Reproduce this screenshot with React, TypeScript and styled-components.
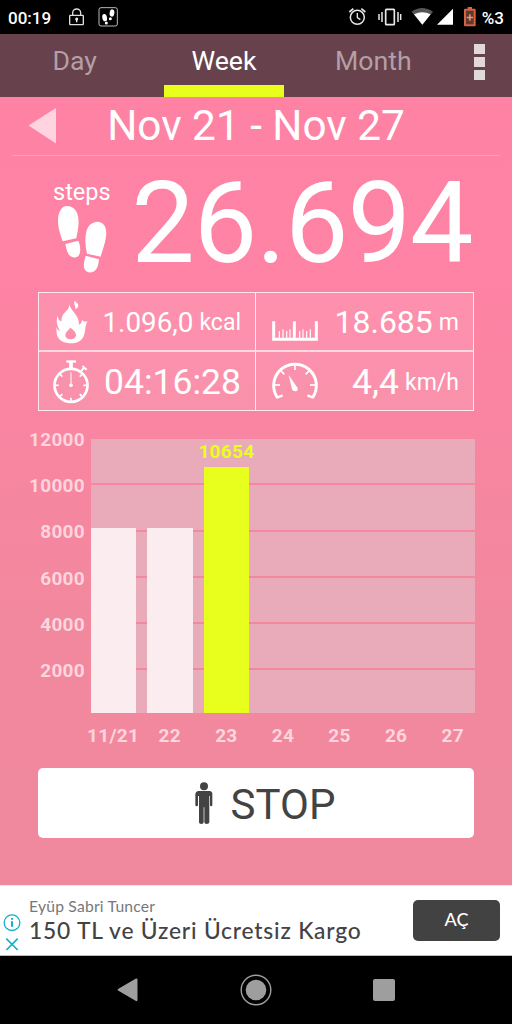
import * as React from 'react'
import styled, { createGlobalStyle } from 'styled-components'

const YELLOW = '#e8ff1e'

const GlobalStyle = createGlobalStyle`
body {
    margin: 0;
    background: #000;
    font-family: Roboto, "Liberation Sans", sans-serif;
}

svg {
    display: block;
    flex: none;
}
`

const Screen = styled.div`
    display: flex;
    flex-direction: column;
    width: 512px;
    height: 1024px;
    overflow: hidden;
    color: #fff;
    background: #000;
`

const StatusBar = styled.div`
    display: flex;
    align-items: center;
    justify-content: space-between;
    height: 34px;
    padding: 0 8px;
    box-sizing: border-box;
    font-size: 17px;
    font-weight: 500;

    .group {
        display: flex;
        align-items: center;
        height: 34px;
    }

    .time {
        padding-top: 1px;
        width: 60px;
    }

    .percent {
        padding: 1px 0 0 6px;
    }
`

const Tabs = styled.div`
    display: flex;
    height: 63px;
    background: #67424c;
`

const Tab = styled.div<{ $active?: boolean }>`
    display: grid;
    grid-template-rows: 51px 12px;
    width: 149.3px;
    text-align: center;
    font-size: 26.7px;
    line-height: 54px;
    color: ${p => (p.$active ? '#fff' : '#b39fa5')};

    .line {
        margin: 0 15px;
        background: ${p => (p.$active ? YELLOW : 'transparent')};
    }
`

const MenuButton = styled.div`
    display: flex;
    flex: 1;
    flex-direction: column;
    align-items: center;
    gap: 3px;
    padding-top: 10px;

    span {
        width: 11px;
        height: 10px;
        background: #e1d8db;
    }
`

const Content = styled.div`
    display: flex;
    flex-direction: column;
    height: 788px;
    background: linear-gradient(180deg, #ff82a5 0%, #fd83a3 28%, #f2889e 65%, #f0899d 100%);
`

const DateHeader = styled.div`
    display: grid;
    grid-template-columns: 1fr auto 1fr;
    align-items: center;
    height: 58px;
    margin: 0 12px;
    padding: 0 16px;
    border-bottom: 1px solid #ff9fb9;
    font-size: 42.3px;
    line-height: 58px;
`

const Summary = styled.div`
    display: flex;
    justify-content: space-between;
    height: 136px;
    padding: 0 39.5px 0 53px;

    .label {
        height: 27px;
        padding-top: 22px;
        font-size: 23.5px;
        line-height: 28px;
    }

    .total {
        font-size: 113px;
        letter-spacing: -1px;
        line-height: 136px;
    }
`

const StatTable = styled.div`
    display: grid;
    grid-template-columns: 216px 1fr;
    grid-template-rows: 57px 1fr;
    width: 436px;
    height: 119px;
    margin-left: 38px;
    box-sizing: border-box;
    border: 1.5px solid #ffe9ee;
    background: rgba(255, 255, 255, 0.11);
`

const Stat = styled.div<{ $right?: boolean; $bottom?: boolean }>`
    display: flex;
    align-items: center;
    justify-content: space-between;
    padding: 0 14px 0 13px;
    border-left: ${p => (p.$right ? '1px solid #ffe9ee' : 'none')};
    border-top: ${p => (p.$bottom ? '2px solid #ffd9e2' : 'none')};
`

const Value = styled.div<{ $size: number; $raise?: number }>`
    display: flex;
    align-items: baseline;
    padding-top: 2px;
    font-size: ${p => p.$size}px;
    white-space: nowrap;

    .unit {
        margin-left: 6px;
        padding-bottom: ${p => p.$raise || 0}px;
        transform: translateY(-${p => p.$raise || 0}px);
        font-size: 23px;
    }
`

const Chart = styled.div`
    display: grid;
    grid-template-columns: 85px 384.5px;
    grid-template-rows: 275px 44px;
    column-gap: 5.7px;
    height: 354px;
    padding-top: 27px;
    box-sizing: border-box;
    font-size: 19px;
    font-weight: 700;
    letter-spacing: 0.3px;
    color: #fdd5dd;
`

const Axis = styled.div`
    display: flex;
    flex-direction: column;
    text-align: right;
    margin-top: -10px;

    div {
        height: 46.2px;
        line-height: 23px;
    }
`

const Plot = styled.div`
    display: grid;

    .bands,
    .bars {
        grid-area: 1 / 1;
        display: flex;
    }

    .bands {
        flex-direction: column;
        gap: 2px;
        padding-top: 1px;
    }

    .bands div {
        height: 44.3px;
        background: #e9aab9;
    }

    .bands div:last-child {
        height: auto;
        flex: 1;
    }

    .bars {
        align-items: flex-end;
        justify-content: space-between;
    }
`

const Bar = styled.div<{ $current?: boolean }>`
    position: relative;
    width: 45.3px;
    background: ${p => (p.$current ? YELLOW : '#fbedef')};

    .value {
        position: absolute;
        top: -27px;
        left: -20px;
        right: -20px;
        text-align: center;
        line-height: 24px;
        color: ${YELLOW};
    }
`

const Days = styled.div`
    grid-column: 2;
    display: flex;
    justify-content: space-between;

    div {
        display: flex;
        justify-content: center;
        width: 45px;
        line-height: 46px;
        white-space: nowrap;
    }
`

const StopButton = styled.div`
    display: flex;
    align-items: center;
    justify-content: center;
    gap: 18px;
    width: 436px;
    height: 70px;
    margin: 3px 0 0 38px;
    padding-left: 18px;
    box-sizing: border-box;
    border-radius: 5px;
    background: #fff;
    color: #434343;
    font-size: 42px;

    .label {
        padding-top: 2px;
    }
`

const Ad = styled.div`
    display: flex;
    align-items: center;
    height: 71px;
    padding: 0 12px 0 4px;
    box-sizing: border-box;
    border-top: 1px solid #f6e4e8;
    border-bottom: 1px solid #bbb;
    background: #fff;
    font-family: Lato, Roboto, sans-serif;

    .text {
        flex: 1;
        margin: -2px 0 0 9px;
        white-space: nowrap;
    }

    .brand {
        color: #77777a;
        font-size: 15.7px;
        letter-spacing: 0.2px;
        line-height: 20px;
    }

    .headline {
        color: #434346;
        font-size: 22.8px;
        font-weight: 500;
        letter-spacing: 0.8px;
        line-height: 28px;
    }
`

const AdButton = styled.div`
    width: 87px;
    height: 41px;
    border-radius: 5px;
    background: #424242;
    text-align: center;
    font-size: 18px;
    font-weight: 500;
    line-height: 39px;
`

const NavBar = styled.div`
    display: grid;
    grid-template-columns: repeat(3, 128px);
    justify-content: center;
    justify-items: center;
    align-items: center;
    height: 68px;
`

function Footprints() {
    return (
        <svg width="50" height="69" viewBox="80 120 150 207" fill="#fff" style={{ marginLeft: 3.7 }}>
            <path d="M110 123C92 123 82 145 83 170C84 195 92 212 97 229L138 220C140 205 147 185 144 160C142 138 130 124 110 123Z" />
            <path d="M105 237L144 227C150 240 153 262 144 273C135 281 120 278 114 266C108 254 107 246 105 237Z" />
            <path d="M203 170C225 172 230 195 227 215C225 235 217 252 211 275L170 266C166 245 163 230 167 205C170 185 182 170 203 170Z" />
            <path d="M166 272L206 283C205 295 203 310 192 319C180 326 164 321 161 308C159 295 163 284 166 272Z" />
        </svg>
    )
}

function LeftStatusIcons() {
    return (
        <svg width="51" height="22" viewBox="204 18 153 66" fill="none">
            <rect x="209" y="46" width="41" height="28" rx="2" stroke="#ddd" strokeWidth="4" />
            <path d="M218 45V38a12 11 0 0 1 24 0V45" stroke="#ddd" strokeWidth="4" />
            <circle cx="230" cy="57" r="4.5" fill="#eee" />
            <path d="M230 57V67" stroke="#eee" strokeWidth="4" />
            <rect x="297" y="23" width="55" height="55" rx="6" stroke="#ddd" strokeWidth="2.5" />
            <g fill="#fff">
                <ellipse cx="314" cy="53" rx="7" ry="11" transform="rotate(-12 314 53)" />
                <ellipse cx="319" cy="69" rx="4.5" ry="4.5" />
                <ellipse cx="336" cy="39" rx="7" ry="11" transform="rotate(10 336 39)" />
                <ellipse cx="331" cy="56" rx="4.5" ry="4.5" />
            </g>
        </svg>
    )
}

function RightStatusIcons() {
    return (
        <svg width="128" height="24" viewBox="276 16 384 72" fill="none">
            <circle cx="304" cy="53" r="21" stroke="#e8e8e8" strokeWidth="4.5" />
            <path d="M304 40V54L313 60" stroke="#e8e8e8" strokeWidth="4" />
            <path d="M280 37L292 27M328 37L316 27" stroke="#e8e8e8" strokeWidth="5" />
            <rect x="389" y="29" width="26" height="46" rx="2" stroke="#e8e8e8" strokeWidth="5" />
            <path d="M378 37V67M426 37V67M369 43V61M434 43V61" stroke="#e8e8e8" strokeWidth="4.5" />
            <path d="M467 36Q498 14 531 36L499 75Z" fill="#555" />
            <path d="M474 44Q499 31 524 44L499 75Z" fill="#fff" />
            <path d="M591 27V75H543Z" fill="#fff" />
            <path d="M635 22H648V27H656Q659 27 659 30V77Q659 80 656 80H627Q624 80 624 77V30Q624 27 627 27H635Z" fill="#d9623f" />
            <path d="M630 33H653V74H630Z" fill="#593b34" />
            <path d="M641.5 44V63M632 53.5H651" stroke="#ff8f6b" strokeWidth="4.5" />
        </svg>
    )
}

function Flame() {
    return (
        <svg width="40" height="46" viewBox="66 44 120 138" fill="#fff" fillRule="evenodd">
            <path d="M118 60C122 80 148 92 147 121C152 120 156 114 155 107C162 112 168 113 173 111C164 122 168 142 160 158C152 172 138 177 124 177C104 177 86 170 81 152C79 143 80 134 79 128C82 136 86 140 90 139C80 122 78 108 83 94C84 104 88 110 95 111C92 92 106 84 112 76C117 70 118 66 118 60ZM122 130C128 136 138 142 138 152C137 162 130 165 122 165C113 165 106 160 106 151C107 142 116 136 122 130Z" />
            <path d="M136 48C127 58 138 62 136 75C147 70 146 61 142 57C137 53 136 52 136 48Z" />
        </svg>
    )
}

function Stopwatch() {
    const ticks = [45, 90, 135, 180, 225, 270, 315]
    return (
        <svg width="40" height="45" viewBox="66 222 120 135" fill="none" stroke="#fff">
            <circle cx="123" cy="301" r="49.5" strokeWidth="8" />
            <path d="M109 229.5H138" strokeWidth="7" />
            <path d="M123 230V250" strokeWidth="11" />
            <path d="M153 258L163 248" strokeWidth="6" />
            <path d="M157 243L170 254" strokeWidth="6" />
            <path d="M123 262V300" strokeWidth="3" />
            <circle cx="123" cy="301" r="5.5" fill="#fff" stroke="none" />
            {ticks.map(a => (
                <path key={a} d="M123 254V264" strokeWidth="5" transform={`rotate(${a} 123 301)`} />
            ))}
        </svg>
    )
}

function Ruler() {
    return (
        <svg width="46" height="20" viewBox="65 109 138 60" fill="none" stroke="#fff" style={{ marginTop: 19, marginLeft: 2.5 }}>
            <path d="M70 110V164H198V110" strokeWidth="9" />
            <path d="M132 110V164" strokeWidth="9" />
            <path d="M87 139V162M98 134V162M109 139V162M119 134V162M148 139V162M158 134V162M169 139V162M180 134V162" strokeWidth="3.5" />
        </svg>
    )
}

function Gauge() {
    const ticks = [-90, -45, 0, 45, 90]
    return (
        <svg width="48" height="40" viewBox="62 231 144 120" fill="none" stroke="#fff" style={{ marginLeft: 1.5 }}>
            <path d="M82 342A64 64 0 1 1 186 342" strokeWidth="9" />
            <path d="M80 341L97 334M188 341L171 334" strokeWidth="7" />
            {ticks.map(a => (
                <path key={a} d="M134 240V258" strokeWidth="5" transform={`rotate(${a} 134 303)`} />
            ))}
            <path d="M115 273L142 312Q144 321 135 322Q127 322 125 316Z" fill="#fff" stroke="none" />
        </svg>
    )
}

function Person() {
    return (
        <svg width="18" height="43" viewBox="104 64 54 129" fill="#434343">
            <circle cx="131" cy="77" r="12" />
            <path d="M113 91H148Q156 92 156 100V133Q156 137 152.5 137Q149 137 149 133V106H147V185Q146 190 139.500 190Q132 190 132 185V140H130V185Q130 190 123 190Q116 190 116 185V106H113V133Q113 137 109 137Q105 137 105 133V100Q106 92 113 91Z" />
        </svg>
    )
}

function AdMarks() {
    return (
        <svg width="16" height="56" viewBox="12 53 48 168" fill="none" stroke="#13b0ca" strokeWidth="4" style={{ overflow: 'visible' }}>
            <circle cx="36" cy="142" r="23.5" strokeWidth="4" />
            <path d="M36 138V154" strokeWidth="6" />
            <path d="M36 128V133" strokeWidth="6" />
            <path d="M19 190L53 224M53 190L19 224" strokeWidth="5" />
        </svg>
    )
}

const days = [
    { day: '11/21', height: 185 },
    { day: '22', height: 185 },
    { day: '23', height: 246, value: 10654 },
    { day: '24', height: 0 },
    { day: '25', height: 0 },
    { day: '26', height: 0 },
    { day: '27', height: 0 },
]

const levels = [12000, 10000, 8000, 6000, 4000, 2000]

function App() {
    return (
        <Screen>
            <GlobalStyle />
            <StatusBar>
                <div className="group">
                    <div className="time">00:19</div>
                    <LeftStatusIcons />
                </div>
                <div className="group">
                    <RightStatusIcons />
                    <div className="percent">%3</div>
                </div>
            </StatusBar>

            <Tabs>
                <Tab>Day<div className="line" /></Tab>
                <Tab $active>Week<div className="line" /></Tab>
                <Tab>Month<div className="line" /></Tab>
                <MenuButton><span /><span /><span /></MenuButton>
            </Tabs>

            <Content>
                <DateHeader>
                    <svg width="28" height="36" viewBox="0 0 28 36" fill="#ffd3df">
                        <path d="M0.5 17.5L28 0V35.5Z" />
                    </svg>
                    <div>Nov 21 - Nov 27</div>
                </DateHeader>

                <Summary>
                    <div>
                        <div className="label">steps</div>
                        <Footprints />
                    </div>
                    <div className="total">26.694</div>
                </Summary>

                <StatTable>
                    <Stat>
                        <Flame />
                        <Value $size={27.8} $raise={2}>1.096,0<span className="unit">kcal</span></Value>
                    </Stat>
                    <Stat $right>
                        <Ruler />
                        <Value $size={32} $raise={3}>18.685<span className="unit">m</span></Value>
                    </Stat>
                    <Stat $bottom>
                        <Stopwatch />
                        <Value $size={35.5}>04:16:28</Value>
                    </Stat>
                    <Stat $right $bottom>
                        <Gauge />
                        <Value $size={35.5} $raise={4}>4,4<span className="unit">km/h</span></Value>
                    </Stat>
                </StatTable>

                <Chart>
                    <Axis>
                        {levels.map(level => <div key={level}>{level}</div>)}
                    </Axis>
                    <Plot>
                        <div className="bands">
                            {levels.map(level => <div key={level} />)}
                        </div>
                        <div className="bars">
                            {days.map(d => (
                                <Bar key={d.day} $current={!!d.value} style={{ height: d.height }}>
                                    {d.value && <div className="value">{d.value}</div>}
                                </Bar>
                            ))}
                        </div>
                    </Plot>
                    <Days>
                        {days.map(d => <div key={d.day}>{d.day}</div>)}
                    </Days>
                </Chart>

                <StopButton>
                    <Person />
                    <div className="label">STOP</div>
                </StopButton>
            </Content>

            <Ad>
                <AdMarks />
                <div className="text">
                    <div className="brand">Eyüp Sabri Tuncer</div>
                    <div className="headline">150 TL ve Üzeri Ücretsiz Kargo</div>
                </div>
                <AdButton>AÇ</AdButton>
            </Ad>

            <NavBar>
                <svg width="23" height="24" viewBox="0 0 23 24" fill="#9e9e9e">
                    <path d="M1 11L19 0.5Q20.5 0 20.5 1.5V22Q20.5 23.5 19 23L1 12.5Q0 12 1 11Z" />
                </svg>
                <svg width="32" height="32" viewBox="0 0 32 32">
                    <circle cx="16" cy="16" r="14.8" fill="none" stroke="#9e9e9e" strokeWidth="1.4" />
                    <circle cx="16" cy="16" r="10.3" fill="#9e9e9e" />
                </svg>
                <svg width="22" height="22" viewBox="0 0 22 22">
                    <rect width="22" height="22" rx="2" fill="#9e9e9e" />
                </svg>
            </NavBar>
        </Screen>
    )
}

export default App
